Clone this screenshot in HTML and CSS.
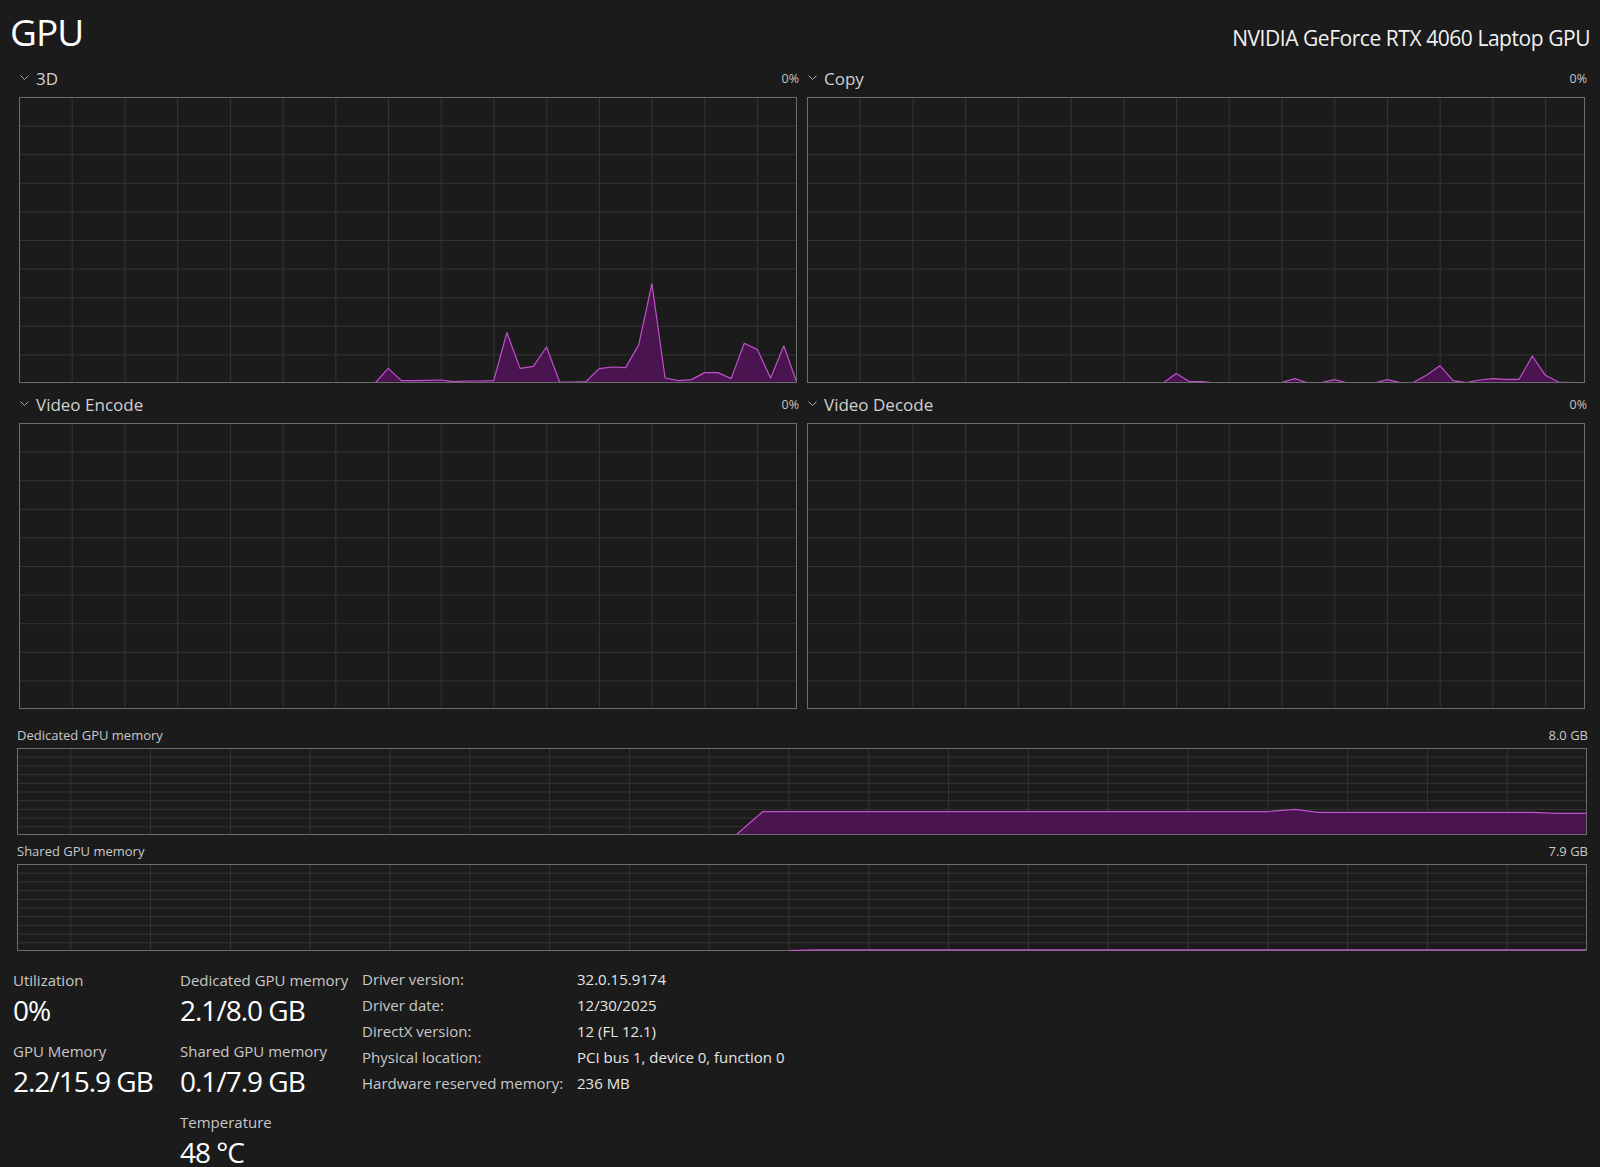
FILE: index.html
```html
<!DOCTYPE html>
<html lang="en">
<head>
<meta charset="utf-8">
<title>GPU</title>
<link rel="stylesheet" href="styles.css">
</head>
<body>
<div class="page">
  <header class="top">
    <h1 class="title">GPU</h1>
    <div class="model">NVIDIA GeForce RTX 4060 Laptop GPU</div>
  </header>

  <section class="engines">
    <div class="engine">
      <div class="engine-head">
        <svg class="chev" viewBox="0 0 9 6"><polyline points="0.5,0.5 4.5,4.5 8.5,0.5"/></svg>
        <span class="engine-name">3D</span>
        <span class="engine-pct">0%</span>
      </div>
      <svg class="chart" viewBox="0 0 778 286">
        <defs>
          <pattern id="grid-3d" width="52.72" height="28.6" patternUnits="userSpaceOnUse">
            <path d="M0.5 0V28.6M0 0.5H52.72" class="gridline"/>
          </pattern>
        </defs>
        <rect width="778" height="286" fill="url(#grid-3d)"/>
        <polygon class="area" points="0,286 356.1,286 369.2,271.4 382.4,283.6 395.6,283.6 408.8,283.4 422,283 435.2,284.6 448.4,284 461.5,284 474.7,283.6 487.9,235.7 501.1,271.4 514.3,269.3 527.5,250 540.7,285 553.8,285 567,284.5 580.2,271.6 593.4,270 606.6,270.6 619.8,247.6 632.9,186.6 646.1,281 659.3,283.6 672.5,282.6 685.7,275.6 698.9,275.6 712.1,281.6 725.3,246.3 738.4,252.6 751.6,281 764.8,249 778,286"/>
        <polyline class="line" points="356.1,286 369.2,271.4 382.4,283.6 395.6,283.6 408.8,283.4 422,283 435.2,284.6 448.4,284 461.5,284 474.7,283.6 487.9,235.7 501.1,271.4 514.3,269.3 527.5,250 540.7,285 553.8,285 567,284.5 580.2,271.6 593.4,270 606.6,270.6 619.8,247.6 632.9,186.6 646.1,281 659.3,283.6 672.5,282.6 685.7,275.6 698.9,275.6 712.1,281.6 725.3,246.3 738.4,252.6 751.6,281 764.8,249 778,286"/>
        <rect class="frame" x="0.5" y="0.5" width="777" height="285"/>
      </svg>
    </div>

    <div class="engine">
      <div class="engine-head">
        <svg class="chev" viewBox="0 0 9 6"><polyline points="0.5,0.5 4.5,4.5 8.5,0.5"/></svg>
        <span class="engine-name">Copy</span>
        <span class="engine-pct">0%</span>
      </div>
      <svg class="chart" viewBox="0 0 778 286">
        <defs>
          <pattern id="grid-copy" width="52.72" height="28.6" patternUnits="userSpaceOnUse">
            <path d="M0.5 0V28.6M0 0.5H52.72" class="gridline"/>
          </pattern>
        </defs>
        <rect width="778" height="286" fill="url(#grid-copy)"/>
        <polygon class="area" points="0,286 356.1,286 369.2,276.5 382.4,284.6 395.6,284.5 408.8,286 461.5,286 474.7,285.5 487.9,281.6 501.1,286 514.3,285.5 527.4,282.6 540.6,286 553.8,285.7 567,286 580.2,282.6 593.4,285.7 606.6,285.3 619.8,278 632.9,268.7 646.1,283.7 659.3,285.7 672.5,283 685.7,281.7 698.9,282.3 712.1,282.3 725.3,259 738.4,278.3 751.6,285 764.8,285.7 778,286"/>
        <polyline class="line" points="356.1,286 369.2,276.5 382.4,284.6 395.6,284.5 408.8,286 461.5,286 474.7,285.5 487.9,281.6 501.1,286 514.3,285.5 527.4,282.6 540.6,286 553.8,285.7 567,286 580.2,282.6 593.4,285.7 606.6,285.3 619.8,278 632.9,268.7 646.1,283.7 659.3,285.7 672.5,283 685.7,281.7 698.9,282.3 712.1,282.3 725.3,259 738.4,278.3 751.6,285 764.8,285.7 778,286"/>
        <rect class="frame" x="0.5" y="0.5" width="777" height="285"/>
      </svg>
    </div>

    <div class="engine">
      <div class="engine-head">
        <svg class="chev" viewBox="0 0 9 6"><polyline points="0.5,0.5 4.5,4.5 8.5,0.5"/></svg>
        <span class="engine-name">Video Encode</span>
        <span class="engine-pct">0%</span>
      </div>
      <svg class="chart" viewBox="0 0 778 286">
        <defs>
          <pattern id="grid-enc" width="52.72" height="28.6" patternUnits="userSpaceOnUse">
            <path d="M0.5 0V28.6M0 0.5H52.72" class="gridline"/>
          </pattern>
        </defs>
        <rect width="778" height="286" fill="url(#grid-enc)"/>
        <rect class="frame" x="0.5" y="0.5" width="777" height="285"/>
      </svg>
    </div>

    <div class="engine">
      <div class="engine-head">
        <svg class="chev" viewBox="0 0 9 6"><polyline points="0.5,0.5 4.5,4.5 8.5,0.5"/></svg>
        <span class="engine-name">Video Decode</span>
        <span class="engine-pct">0%</span>
      </div>
      <svg class="chart" viewBox="0 0 778 286">
        <defs>
          <pattern id="grid-dec" width="52.72" height="28.6" patternUnits="userSpaceOnUse">
            <path d="M0.5 0V28.6M0 0.5H52.72" class="gridline"/>
          </pattern>
        </defs>
        <rect width="778" height="286" fill="url(#grid-dec)"/>
        <rect class="frame" x="0.5" y="0.5" width="777" height="285"/>
      </svg>
    </div>
  </section>

  <section class="mem">
    <div class="mem-block">
      <div class="mem-head"><span>Dedicated GPU memory</span><span class="mem-max">8.0 GB</span></div>
      <svg class="mem-chart" viewBox="0 0 1570 87">
        <defs>
          <pattern id="grid-ded" x="53.3" width="79.8" height="8.7" patternUnits="userSpaceOnUse">
            <path d="M0.5 0V8.7M0 0.5H79.8" class="gridline"/>
          </pattern>
        </defs>
        <rect width="1570" height="87" fill="url(#grid-ded)"/>
        <polygon class="area" points="0,87 719,87 745.7,63.7 1250,63.7 1278,61.3 1301,64.3 1516,64.3 1540,65.3 1570,65.3 1570,87"/>
        <polyline class="line" points="719,87 745.7,63.7 1250,63.7 1278,61.3 1301,64.3 1516,64.3 1540,65.3 1570,65.3"/>
        <rect class="frame" x="0.5" y="0.5" width="1569" height="86"/>
      </svg>
    </div>
    <div class="mem-block">
      <div class="mem-head"><span>Shared GPU memory</span><span class="mem-max">7.9 GB</span></div>
      <svg class="mem-chart" viewBox="0 0 1570 87">
        <defs>
          <pattern id="grid-shr" x="53.3" width="79.8" height="8.7" patternUnits="userSpaceOnUse">
            <path d="M0.5 0V8.7M0 0.5H79.8" class="gridline"/>
          </pattern>
        </defs>
        <rect width="1570" height="87" fill="url(#grid-shr)"/>
        <rect class="frame" x="0.5" y="0.5" width="1569" height="86"/>
        <polyline class="line" points="772,86.6 798.6,85.9 1569,85.9"/>
      </svg>
    </div>
  </section>

  <section class="stats">
    <div class="stat-col">
      <div class="stat">
        <div class="stat-label">Utilization</div>
        <div class="stat-value">0%</div>
      </div>
      <div class="stat">
        <div class="stat-label">GPU Memory</div>
        <div class="stat-value">2.2/15.9 GB</div>
      </div>
    </div>
    <div class="stat-col">
      <div class="stat">
        <div class="stat-label">Dedicated GPU memory</div>
        <div class="stat-value">2.1/8.0 GB</div>
      </div>
      <div class="stat">
        <div class="stat-label">Shared GPU memory</div>
        <div class="stat-value">0.1/7.9 GB</div>
      </div>
      <div class="stat">
        <div class="stat-label">Temperature</div>
        <div class="stat-value">48 °C</div>
      </div>
    </div>
    <dl class="details">
      <dt>Driver version:</dt><dd>32.0.15.9174</dd>
      <dt>Driver date:</dt><dd>12/30/2025</dd>
      <dt>DirectX version:</dt><dd>12 (FL 12.1)</dd>
      <dt>Physical location:</dt><dd>PCI bus 1, device 0, function 0</dd>
      <dt>Hardware reserved memory:</dt><dd>236 MB</dd>
    </dl>
  </section>
</div>
</body>
</html>
```

FILE: styles.css
```css
* {
  box-sizing: border-box;
  margin: 0;
  padding: 0;
}

html, body {
  background: #1b1b1b;
}

body {
  width: 1600px;
  height: 1167px;
  overflow: hidden;
  font-family: "Open Sans", "Noto Sans", sans-serif;
  color: #cfcfcf;
}

.top {
  display: flex;
  justify-content: space-between;
  align-items: flex-start;
  height: 57px;
  padding: 0 10px 0 10px;
}

.title {
  font-size: 37px;
  line-height: 37px;
  font-weight: 400;
  letter-spacing: -1px;
  color: #ffffff;
  padding-top: 13px;
}

.model {
  font-size: 21px;
  line-height: 21px;
  letter-spacing: -0.45px;
  color: #f2f2f2;
  padding-top: 28px;
}

.engines {
  display: grid;
  grid-template-columns: 778px 778px;
  column-gap: 10px;
  padding: 0 15px 0 19px;
}

.engine-head {
  height: 40px;
  display: flex;
  align-items: flex-end;
  padding-bottom: 10px;
}

.chev {
  align-self: flex-start;
  width: 9px;
  height: 6px;
  margin: 18px 7px 0 1px;
}

.chev polyline {
  fill: none;
  stroke: #a8a8a8;
  stroke-width: 1;
}

.engine-name {
  font-size: 17px;
  line-height: 17px;
  color: #d0d0d0;
}

.engine-pct {
  margin-left: auto;
  margin-right: -2px;
  margin-bottom: 2px;
  font-size: 12.5px;
  line-height: 13px;
  color: #c4c4c4;
}

.chart {
  display: block;
  width: 778px;
  height: 286px;
}

.gridline {
  fill: none;
  stroke: #333333;
  stroke-width: 1;
}

.area {
  fill: #4a1450;
  stroke: none;
}

.line {
  fill: none;
  stroke: #bd52c9;
  stroke-width: 1.2;
  stroke-linejoin: round;
}

.frame {
  fill: none;
  stroke: #6c6c6c;
  stroke-width: 1;
}

.mem {
  padding: 10px 13px 0 17px;
}

.mem-head {
  height: 29px;
  display: flex;
  justify-content: space-between;
  align-items: flex-end;
  padding-bottom: 6px;
  font-size: 13px;
  line-height: 13px;
  color: #c8c8c8;
}

.mem-max {
  margin-right: -1px;
}

.mem-chart {
  display: block;
  width: 1570px;
  height: 87px;
}

.stats {
  display: grid;
  grid-template-columns: 167px 182px auto;
  padding-left: 13px;
}

.stat-col {
  padding-top: 19px;
}

.stat {
  margin-bottom: 16px;
}

.stat-label {
  font-size: 15px;
  line-height: 20px;
  color: #c8c8c8;
}

.stat-value {
  margin-top: 5px;
  font-size: 28px;
  line-height: 30px;
  letter-spacing: -1px;
  color: #ffffff;
}

.details {
  display: grid;
  grid-template-columns: 215px auto;
  grid-auto-rows: 26px;
  padding-top: 15px;
  font-size: 15px;
  line-height: 26px;
}

.details dt {
  color: #c8c8c8;
}

.details dd {
  color: #e6e6e6;
}
```
